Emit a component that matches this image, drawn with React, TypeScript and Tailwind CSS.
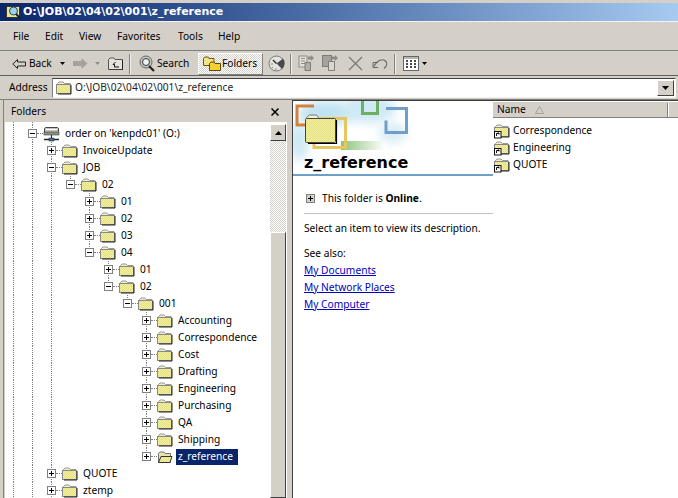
import React from 'react';

// dithered yellow shared by all folder drawings
const FolderPattern = () => (
  <pattern id="dither" width="2" height="2" patternUnits="userSpaceOnUse">
    <rect width="2" height="2" fill="#f6f29a" />
    <rect width="1" height="1" fill="#e0de88" />
    <rect x="1" y="1" width="1" height="1" fill="#e0de88" />
  </pattern>
);

const Folder: React.FC<{ shortcut?: boolean; open?: boolean }> = ({ shortcut, open }) => (
  <svg width="16" height="16" viewBox="0 0 16 16" className="shrink-0">
    <defs><FolderPattern /></defs>
    {open ? (
      <>
        <path d="M1.5 13.5V4.5L3 3h4l1 1.500h5.500v9z" fill="#e6e4b0" stroke="#777" />
        <path d="M1.500 13.500L4 7.500h11l-2 6z" fill="url(#dither)" stroke="#333" />
      </>
    ) : (
      <>
        <path d="M1.500 5V3.500L3 2h4l1.500 1.500H14V5z" fill="#eeecd0" stroke="#999" />
        <rect x="0.500" y="4.500" width="14" height="9" fill="url(#dither)" stroke="#888" />
        <path d="M15 5v9H2" stroke="#222" fill="none" />
      </>
    )}
    {shortcut && (
      <>
        <rect x="0.500" y="8.500" width="6.500" height="6.500" fill="#fff" stroke="#111" />
        <path d="M2.500 13v-2.500H5M3.500 10l1.500 0 0 1.500" stroke="#111" fill="none" />
      </>
    )}
  </svg>
);

const Tri: React.FC<{ className?: string }> = ({ className }) => (
  <svg width="5" height="3" viewBox="0 0 5 3" className={className}>
    <path d="M0 0h5L2.500 3z" fill="currentColor" />
  </svg>
);

const BackIcon = () => (
  <svg width="14" height="10" viewBox="0 0 14 10">
    <path d="M5.500 0.500L0.800 5l4.700 4.500V7H13.500V3H5.500z" fill="#d4d0c8" stroke="#222" />
  </svg>
);

const ForwardIcon = () => (
  <svg width="15" height="11" viewBox="0 0 15 11">
    <path d="M8.500 0l6 5.500-6 5.500V8H0V3h8.500z" fill="#a5a29b" />
  </svg>
);

const UpIcon = () => (
  <svg width="15" height="13" viewBox="0 0 15 13">
    <path d="M0.500 12.500V2.500L2 1h4l1 1.500h7.500v10z" fill="#e4e2da" stroke="#555" />
    <path d="M7.500 5L5 7.500h1.500V10H11" fill="none" stroke="#111" />
    <path d="M14.500 3v10H1" stroke="#222" fill="none" />
  </svg>
);

const SearchIcon = () => (
  <svg width="17" height="17" viewBox="0 0 17 17">
    <circle cx="7" cy="7" r="6" fill="#c9c7c0" stroke="#666" />
    <circle cx="7" cy="7" r="3.500" fill="#eef2f4" stroke="#333" />
    <path d="M10 11l5 5" stroke="#222" strokeWidth="2.200" />
  </svg>
);

const FoldersIcon = () => (
  <svg width="18" height="16" viewBox="0 0 18 16" className="shrink-0">
    <path d="M0.500 9.500v-7L2 1h3l1 1.500h5v7z" fill="#f3e38a" stroke="#6b5a10" />
    <path d="M6.500 14.500v-7L8 6h3l1 1.500h5.500v7z" fill="#f6cf30" stroke="#5a4a08" />
  </svg>
);

const HistoryIcon = () => (
  <svg width="17" height="17" viewBox="0 0 17 17">
    <circle cx="8.500" cy="8.500" r="7.500" fill="#e6e4de" stroke="#777" />
    <path d="M8.500 8.500L15 3.500A8 8 0 0 1 14 14z" fill="#4a4a4a" />
    <path d="M8.500 8.500L5 5" stroke="#333" strokeWidth="1.500" />
    <path d="M3 9h2M8 13v2M4 13l1-1" stroke="#8a8a8a" />
  </svg>
);

const MoveIcon = () => (
  <svg width="17" height="17" viewBox="0 0 17 17">
    <rect x="1" y="1" width="8" height="11" fill="#e4e1da" stroke="#8d8b85" />
    <path d="M3 3.500h4M3 6h4M3 8.500h4" stroke="#8d8b85" />
    <path d="M7 7.500h5.500v8H7z" fill="#b2afa8" stroke="#7d7b75" />
    <path d="M10 1.500h3V0l3 3-3 3V4.500h-3z" fill="#8d8b85" />
  </svg>
);

const CopyIcon = () => (
  <svg width="17" height="17" viewBox="0 0 17 17">
    <rect x="0.500" y="0.500" width="9" height="11" fill="#a5a29b" stroke="#7d7b75" />
    <path d="M6.500 6.500h6v9h-6z" fill="#dad7d0" stroke="#7d7b75" />
    <path d="M10 1.500h3V0l3 3-3 3V4.500h-3z" fill="#8d8b85" />
  </svg>
);

const DeleteIcon = () => (
  <svg width="15" height="15" viewBox="0 0 15 15">
    <path d="M1 1l13 13M14 1L1 14" stroke="#777" strokeWidth="1.200" />
  </svg>
);

const UndoIcon = () => (
  <svg width="16" height="13" viewBox="0 0 16 13">
    <path d="M1 5.500h5M1 5.500v5h5" stroke="#666" fill="none" />
    <path d="M2 9.500C5 3 11 1 14 4.500c1.500 2 .5 5-2 7" stroke="#666" strokeWidth="1.200" fill="none" />
  </svg>
);

const ViewsIcon = () => (
  <svg width="16" height="15" viewBox="0 0 16 15">
    <rect x="0.500" y="0.500" width="15" height="14" fill="#fff" stroke="#666" />
    <rect x="1" y="1" width="14" height="2" fill="#b8b6b0" />
    <path d="M3 5h2M7 5h2M11 5h2M3 8h2M7 8h2M11 8h2M3 11h2M7 11h2M11 11h2" stroke="#111" strokeWidth="1.500" />
  </svg>
);

const ServerIcon = () => (
  <svg width="17" height="16" viewBox="0 0 17 16" className="shrink-0">
    <path d="M2.500 1.500h12l1 1v4h-14v-4z" fill="#c4c2ba" stroke="#444" />
    <path d="M3 3.500h11" stroke="#fff" />
    <rect x="1" y="6" width="15" height="3" fill="#8f8d86" stroke="#444" strokeWidth="0.600" />
    <rect x="12" y="7" width="2" height="1" fill="#2cd02c" />
    <path d="M8.500 9v4" stroke="#222" />
    <path d="M1 13.500h15" stroke="#222" strokeWidth="1.500" />
    <rect x="6" y="12" width="5" height="3" fill="#3a6ea5" stroke="#222" strokeWidth="0.500" />
  </svg>
);

const Expander: React.FC<{ sign: '+' | '-' }> = ({ sign }) => (
  <svg width="9" height="9" viewBox="0 0 9 9" className="absolute left-[-4px] top-[4px] bg-white">
    <rect x="0.500" y="0.500" width="8" height="8" fill="#fff" stroke="#808080" />
    <path d="M2 4.500h5" stroke="#000" />
    {sign === '+' && <path d="M4.500 2v5" stroke="#000" />}
  </svg>
);

const Banner = () => (
  <svg width="200" height="75" viewBox="0 0 200 75" className="block">
    <defs>
      <FolderPattern />
      <filter id="soft"><feGaussianBlur stdDeviation="5" /></filter>
      <linearGradient id="grass" x1="0" x2="1">
        <stop offset="0" stopColor="#6fb45c" />
        <stop offset="1" stopColor="#ffffff" />
      </linearGradient>
    </defs>
    <g filter="url(#soft)">
      <ellipse cx="35" cy="12" rx="30" ry="12" fill="#bfe3f2" />
      <ellipse cx="75" cy="8" rx="28" ry="14" fill="#cfe9f5" />
      <ellipse cx="100" cy="32" rx="14" ry="10" fill="#d7edf6" />
      <ellipse cx="6" cy="40" rx="10" ry="20" fill="#cfe9f5" />
    </g>
    <rect x="48" y="40" width="44" height="9" fill="url(#grass)" opacity="0.800" />
    <path d="M21 5H4v19h11" fill="none" stroke="#d2813c" strokeWidth="3" />
    <path d="M69.500 0v12.500h15V0" fill="none" stroke="#6faf62" strokeWidth="3" />
    <path d="M93 7.500h20.500v24h-20.500v-12" fill="none" stroke="#6f9fc8" strokeWidth="3" />
    <path d="M27 17.500h25.500v29h-31.500v-6" fill="none" stroke="#e6c65f" strokeWidth="3" />
    <path d="M13.500 17.500v-1l3-2.500h7l3 3.500" fill="#eeeeda" stroke="#777" />
    <rect x="12.500" y="17.500" width="30" height="24" rx="1" fill="url(#dither)" stroke="#444" />
    <path d="M43.500 19v23.500H15" fill="none" stroke="#000" strokeWidth="1.200" />
  </svg>
);

const ComboArrow: React.FC<{ up?: boolean }> = ({ up }) => (
  <svg width="7" height="4" viewBox="0 0 7 4">
    <path d={up ? 'M3.500 0L7 4H0z' : 'M0 0h7L3.500 4z'} fill="#000" />
  </svg>
);

const raised = 'border border-t-white border-l-white border-r-[#404040] border-b-[#404040] bg-[#d4d0c8]';
const dither = 'bg-[repeating-conic-gradient(#d4d0c8_0_25%,#ffffff_0_50%)] bg-[length:2px_2px]';

const Sep: React.FC<{ className?: string }> = ({ className }) => (
  <div className={`h-[20px] w-[2px] border-l border-[#808080] bg-white/70 ${className ?? ''}`} />
);

interface TreeItem {
  label: string;
  at: number;            // index of the column the expander sits on
  sign: '+' | '-';
  last?: boolean;
  icon?: 'server' | 'open';
  selected?: boolean;
}

const tree: TreeItem[] = [
  { label: "order on 'kenpdc01' (O:)", at: 1, sign: '-', icon: 'server' },
  { label: 'InvoiceUpdate', at: 2, sign: '+' },
  { label: 'JOB', at: 2, sign: '-' },
  { label: '02', at: 3, sign: '-', last: true },
  { label: '01', at: 4, sign: '+' },
  { label: '02', at: 4, sign: '+' },
  { label: '03', at: 4, sign: '+' },
  { label: '04', at: 4, sign: '-', last: true },
  { label: '01', at: 5, sign: '+' },
  { label: '02', at: 5, sign: '-', last: true },
  { label: '001', at: 6, sign: '-', last: true },
  { label: 'Accounting', at: 7, sign: '+' },
  { label: 'Correspondence', at: 7, sign: '+' },
  { label: 'Cost', at: 7, sign: '+' },
  { label: 'Drafting', at: 7, sign: '+' },
  { label: 'Engineering', at: 7, sign: '+' },
  { label: 'Purchasing', at: 7, sign: '+' },
  { label: 'QA', at: 7, sign: '+' },
  { label: 'Shipping', at: 7, sign: '+' },
  { label: 'z_reference', at: 7, sign: '+', last: true, icon: 'open', selected: true },
  { label: 'QUOTE', at: 2, sign: '+' },
  { label: 'ztemp', at: 2, sign: '+' },
];

const TreeRow: React.FC<{ item: TreeItem }> = ({ item }) => {
  const cols = Array.from({ length: item.at }, (_, i) => i);
  return (
    <div className="flex h-[17px] items-stretch pl-[8px]">
      {cols.map((i) => (
        <div key={i} className={`w-[19px] shrink-0 ${i < 3 ? 'border-l border-dotted border-[#808080]' : ''}`} />
      ))}
      <div className="relative w-[11px] shrink-0">
        <div className={`w-0 border-l border-dotted border-[#808080] ${item.last ? 'h-[9px]' : 'h-[17px]'}`} />
        <div className="absolute left-[5px] top-[8px] w-[6px] border-t border-dotted border-[#808080]" />
        <Expander sign={item.sign} />
      </div>
      <div className="flex items-center">
        {item.icon === 'server' ? <ServerIcon /> : <Folder open={item.icon === 'open'} />}
        <span
          className={`ml-[3px] h-[16px] whitespace-nowrap pl-[2px] leading-[14px] ${
            item.selected ? 'bg-[#0a246a] pr-[5px] text-white' : 'pr-[2px] text-black'
          }`}
        >
          {item.label}
        </span>
      </div>
    </div>
  );
};

const menus = ['File', 'Edit', 'View', 'Favorites', 'Tools', 'Help'];

const App: React.FC = () => (
  <div className="flex h-[498px] w-[678px] flex-col overflow-hidden bg-[#d4d0c8] font-['Noto_Sans',sans-serif] text-[10.2px] text-black">
    <div className="h-[3px] shrink-0 bg-[#d4d0c8]" />
    {/* title bar */}
    <div className="flex h-[18px] shrink-0 items-center bg-gradient-to-r from-[#0a246a] to-[#a6caf0] pl-[6px] text-white">
      <svg width="16" height="16" viewBox="0 0 16 16" className="shrink-0">
        <defs><FolderPattern /></defs>
        <rect x="0.500" y="2.500" width="13" height="11" fill="url(#dither)" stroke="#333" />
        <circle cx="7.500" cy="7" r="4" fill="#9fd0ea" stroke="#1d4a72" />
        <path d="M10 10l4 4" stroke="#222" strokeWidth="2" />
      </svg>
      <span className="ml-[1px] pt-[1px] font-['DejaVu_Sans',sans-serif] text-[11px] font-bold">O:\JOB\02\04\02\001\z_reference</span>
    </div>
    {/* menu bar */}
    <div className="flex h-[29px] shrink-0 items-center border-t border-[#f4f3ef] pl-[13px] pt-[2px]">
      <span className="w-[32px]">{menus[0]}</span>
      <span className="w-[34px]">{menus[1]}</span>
      <span className="w-[38px]">{menus[2]}</span>
      <span className="w-[61px]">{menus[3]}</span>
      <span className="w-[40px]">{menus[4]}</span>
      <span>{menus[5]}</span>
    </div>
    {/* toolbar */}
    <div className="flex h-[25px] shrink-0 items-center border-t border-t-[#808080] pl-[12px] pt-[1px]">
      <BackIcon />
      <span className="ml-[3px] w-[24px]">Back</span>
      <Tri className="ml-[7px] text-black" />
      <div className="ml-[8px]"><ForwardIcon /></div>
      <Tri className="ml-[7px] text-[#8d8b85]" />
      <div className="ml-[8px]"><UpIcon /></div>
      <Sep className="ml-[6px]" />
      <div className="ml-[8px]"><SearchIcon /></div>
      <span className="ml-[1px] w-[34px]">Search</span>
      <div className={`ml-[7px] flex h-[22px] w-[65px] items-center border border-t-white border-l-white border-r-[#808080] border-b-[#808080] pl-[4px] ${dither}`}>
        <FoldersIcon />
        <span className="ml-[1px]">Folders</span>
      </div>
      <div className="ml-[5px]"><HistoryIcon /></div>
      <Sep className="ml-[5px]" />
      <div className="ml-[6px]"><MoveIcon /></div>
      <div className="ml-[7px]"><CopyIcon /></div>
      <div className="ml-[9px]"><DeleteIcon /></div>
      <div className="ml-[9px]"><UndoIcon /></div>
      <Sep className="ml-[6px]" />
      <div className="ml-[7px]"><ViewsIcon /></div>
      <Tri className="ml-[3px] text-black" />
    </div>
    {/* address bar */}
    <div className="flex h-[24px] shrink-0 items-center border-t border-t-[#606060] pl-[9px] pr-[2px]">
      <span className="w-[43px]">Address</span>
      <div className="flex h-[20px] flex-1 items-center border border-t-[#404040] border-l-[#808080] border-r-white border-b-[#f4f3ef] bg-white pl-[3px] pr-[1px]">
        <Folder />
        <span className="ml-[3px] pt-[1px] text-[#222]">O:\JOB\02\04\02\001\z_reference</span>
        <div className={`ml-auto flex h-[16px] w-[17px] items-center justify-center ${raised}`}>
          <ComboArrow />
        </div>
      </div>
    </div>
    {/* panes */}
    <div className="flex min-h-0 flex-1 border-t border-t-[#808080]">
      <div className="flex w-[287px] shrink-0 pl-[3px]">
        <div className="flex min-w-0 flex-1 flex-col border-l border-l-[#808080] pl-[1px]">
          <div className="flex h-[22px] shrink-0 items-center justify-between pl-[6px] pr-[8px] pt-[1px]">
            <span>Folders</span>
            <svg width="8" height="8" viewBox="0 0 8 8">
              <path d="M0.500 0.500l7 7M7.500 0.500l-7 7" stroke="#000" strokeWidth="1.500" />
            </svg>
          </div>
          <div className="flex min-h-0 flex-1 bg-white">
            <div className="min-w-0 flex-1 overflow-hidden">
              <div className="flex h-[3px] pl-[8px]">
                <div className="w-[19px] border-l border-dotted border-[#808080]" />
                <div className="w-[19px] border-l border-dotted border-[#808080]" />
              </div>
              {tree.map((item, i) => (
                <TreeRow key={i} item={item} />
              ))}
            </div>
            <div className="flex w-[17px] shrink-0 flex-col bg-white">
              <div className={`mt-[2px] flex h-[17px] w-[16px] items-center justify-center ${raised}`}>
                <ComboArrow up />
              </div>
              <div className={`h-[91px] w-[16px] shrink-0 ${dither}`} />
              <div className={`w-[16px] flex-1 ${raised}`} />
            </div>
          </div>
        </div>
      </div>
      <div className="w-[5px] shrink-0" />
      <div className="flex min-w-0 flex-1 border-l border-t border-l-[#404040] border-t-[#404040] bg-white">
        {/* web view */}
        <div className="w-[200px] shrink-0">
          <Banner />
          <div className="-mt-[26px] h-[26px] border-b-2 border-[#6f9fc8] pl-[11px] font-['DejaVu_Sans',sans-serif] text-[16px] font-bold leading-[26px]">
            z_reference
          </div>
          <div className="ml-[13px] mt-[15px] flex items-center">
            <svg width="9" height="9" viewBox="0 0 9 9">
              <rect x="0.500" y="0.500" width="8" height="8" fill="#d4d0c8" stroke="#808080" />
              <path d="M2 4.500h5M4.500 2v5" stroke="#000" />
            </svg>
            <span className="ml-[7px]">This folder is <b>Online</b>.</span>
          </div>
          <div className="ml-[11px] mt-[7px] border-t border-[#c0c0c0]" />
          <div className="ml-[11px] mt-[7px] whitespace-nowrap">Select an item to view its description.</div>
          <div className="ml-[11px] mt-[9px]">See also:</div>
          <div className="ml-[11px] mt-[3px] flex flex-col gap-[4px] leading-[13px] text-[#0000c0] underline">
            <span>My Documents</span>
            <span>My Network Places</span>
            <span>My Computer</span>
          </div>
        </div>
        {/* file list */}
        <div className="min-w-0 flex-1">
          <div className="mt-[1px] flex h-[16px] border-b border-[#808080] bg-[#d4d0c8] pt-[1px]">
            <div className="flex w-[175px] items-center border-r border-[#808080] pl-[4px]">
              Name
              <svg width="9" height="8" viewBox="0 0 9 8" className="ml-[9px]">
                <path d="M4.500 0.500L8.500 7.500H0.500z" fill="none" stroke="#a5a29b" />
              </svg>
            </div>
            <div className="flex-1 border-l border-white" />
          </div>
          <div className="mt-[4px] pl-[1px]">
            {['Correspondence', 'Engineering', 'QUOTE'].map((n) => (
              <div key={n} className="flex h-[17px] items-center">
                <Folder shortcut />
                <span className="ml-[3px]">{n}</span>
              </div>
            ))}
          </div>
        </div>
      </div>
    </div>
  </div>
);

export default App;
